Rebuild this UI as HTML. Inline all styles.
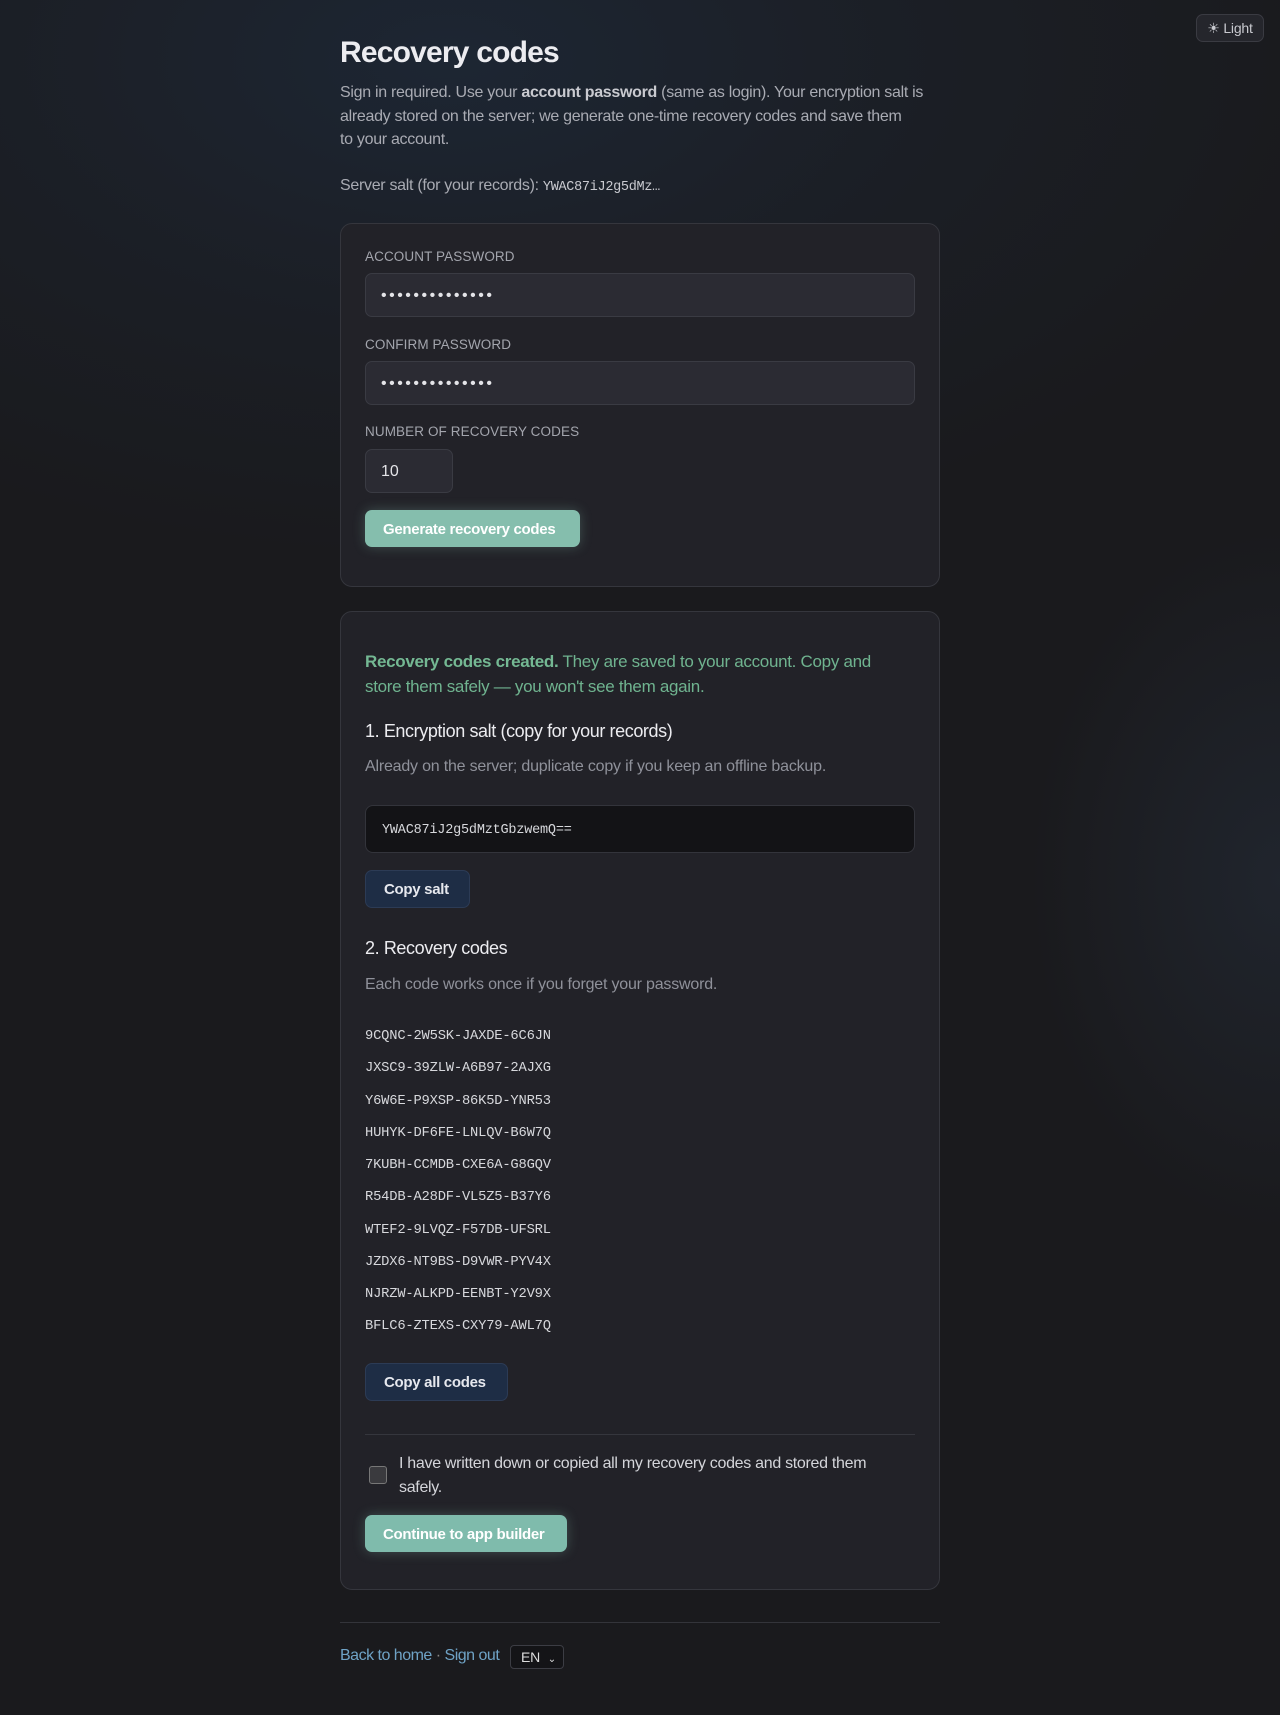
<!DOCTYPE html>
<html><head><meta charset="utf-8"><style>
*{box-sizing:border-box;margin:0;padding:0}
html,body{width:1280px;height:1715px;overflow:hidden}
body{background:#1a1a1d;font-family:"Liberation Sans",sans-serif;color:#e6e6ea;position:relative;letter-spacing:-0.2px}
.bg{position:absolute;inset:0;background:radial-gradient(ellipse 900px 500px at 450px 60px,#1d2633 0%,rgba(29,38,51,0.4) 50%,rgba(26,26,29,0) 100%),radial-gradient(ellipse 250px 350px at 1280px 880px,rgba(36,44,56,0.6),rgba(26,26,29,0))}
.a{position:absolute}
.light{left:1196px;top:14px;width:68px;height:28px;border:1px solid #3a3b42;border-radius:7px;background:#25262c;color:#c8c9cf;font-size:14px;line-height:26px;text-align:center}
h1{left:340px;top:36px;font-size:30px;font-weight:bold;color:#ececf0;letter-spacing:-0.8px}
.intro{left:340px;top:81px;width:610px;font-size:16px;line-height:23.5px;color:#a9abb3;letter-spacing:-0.3px}
.intro b{color:#c9cad0}
.mono{font-family:"Liberation Mono",monospace;font-size:13.5px;color:#c9cad0}
.card{left:340px;width:600px;background:#222228;border:1px solid #35363d;border-radius:12px}
.lbl{left:365px;font-size:13.5px;color:#a3a5ad;letter-spacing:0.1px}
.inp{left:365px;width:550px;height:44px;background:#2b2b33;border:1px solid #3a3b43;border-radius:7px;padding-left:15px;font-size:16px;line-height:44px;color:#e4e4e8;letter-spacing:2.5px}
.btn{left:365px;height:37px;border-radius:7px;background:#85bead;color:#fff;font-size:15px;font-weight:bold;line-height:39px;padding-left:18px;box-shadow:0 0 12px rgba(133,190,173,0.3);letter-spacing:-0.3px}
.btn2{left:365px;height:38px;border-radius:7px;background:#1e2d45;border:1px solid #2c3b55;color:#e6e8ee;font-size:15px;font-weight:bold;line-height:38px;padding-left:18px;letter-spacing:-0.3px}
.h2{left:365px;font-size:18px;color:#ececf0;letter-spacing:-0.4px}
.desc{left:365px;font-size:16px;color:#8f919a}
.code{left:365px;font-family:"Liberation Mono",monospace;font-size:13.8px;color:#d7d8dc}
</style></head><body>
<div class="bg"></div>
<div class="a light">☀ Light</div>
<h1 class="a">Recovery codes</h1>
<div class="a intro">Sign in required. Use your <b>account password</b> (same as login). Your encryption salt is<br>already stored on the server; we generate one-time recovery codes and save them<br>to your account.</div>
<div class="a intro" style="top:174px">Server salt (for your records): <span class="mono">YWAC87iJ2g5dMz…</span></div>

<div class="a card" style="top:223px;height:364px"></div>
<div class="a lbl" style="top:249px">ACCOUNT PASSWORD</div>
<div class="a inp" style="top:273px">••••••••••••••</div>
<div class="a lbl" style="top:337px">CONFIRM PASSWORD</div>
<div class="a inp" style="top:361px">••••••••••••••</div>
<div class="a lbl" style="top:424px">NUMBER OF RECOVERY CODES</div>
<div class="a inp" style="top:449px;width:88px;letter-spacing:0">10</div>
<div class="a btn" style="top:510px;width:215px">Generate recovery codes</div>

<div class="a card" style="top:611px;height:979px"></div>
<div class="a" style="left:365px;top:649px;width:540px;font-size:17px;line-height:25px;color:#6fb38f;letter-spacing:-0.3px"><b style="color:#74b893">Recovery codes created.</b> They are saved to your account. Copy and store them safely — you won't see them again.</div>
<div class="a h2" style="top:721px">1. Encryption salt (copy for your records)</div>
<div class="a desc" style="top:758px">Already on the server; duplicate copy if you keep an offline backup.</div>
<div class="a" style="left:365px;top:805px;width:550px;height:48px;background:#131316;border:1px solid #33343b;border-radius:8px;padding-left:16px;line-height:46px"><span class="mono" style="color:#d7d8dc">YWAC87iJ2g5dMztGbzwemQ==</span></div>
<div class="a btn2" style="top:870px;width:105px">Copy salt</div>
<div class="a h2" style="top:938px">2. Recovery codes</div>
<div class="a desc" style="top:976px">Each code works once if you forget your password.</div>
<div class="a code" style="top:1029px">9CQNC-2W5SK-JAXDE-6C6JN</div>
<div class="a code" style="top:1061px">JXSC9-39ZLW-A6B97-2AJXG</div>
<div class="a code" style="top:1094px">Y6W6E-P9XSP-86K5D-YNR53</div>
<div class="a code" style="top:1126px">HUHYK-DF6FE-LNLQV-B6W7Q</div>
<div class="a code" style="top:1158px">7KUBH-CCMDB-CXE6A-G8GQV</div>
<div class="a code" style="top:1190px">R54DB-A28DF-VL5Z5-B37Y6</div>
<div class="a code" style="top:1223px">WTEF2-9LVQZ-F57DB-UFSRL</div>
<div class="a code" style="top:1255px">JZDX6-NT9BS-D9VWR-PYV4X</div>
<div class="a code" style="top:1287px">NJRZW-ALKPD-EENBT-Y2V9X</div>
<div class="a code" style="top:1319px">BFLC6-ZTEXS-CXY79-AWL7Q</div>
<div class="a btn2" style="top:1363px;width:143px">Copy all codes</div>
<div class="a" style="left:365px;top:1434px;width:550px;height:1px;background:#35363d"></div>
<div class="a" style="left:369px;top:1466px;width:18px;height:18px;border:1px solid #777;border-radius:3px;background:#3a3a3e"></div>
<div class="a" style="left:399px;top:1452px;width:520px;font-size:16px;line-height:24px;color:#d4d5da;letter-spacing:-0.3px">I have written down or copied all my recovery codes and stored them<br>safely.</div>
<div class="a btn" style="top:1515px;width:202px;background:#7fbbac">Continue to app builder</div>

<div class="a" style="left:340px;top:1622px;width:600px;height:1px;background:#33343a"></div>
<div class="a" style="left:340px;top:1647px;font-size:16px;color:#6fa3c6;letter-spacing:-0.5px">Back to home <span style="color:#888">·</span> Sign out</div>
<div class="a" style="left:510px;top:1645px;width:54px;height:24px;border:1px solid #3c3d44;border-radius:4px;background:#141417;color:#ddd;font-size:14px;line-height:22px;padding-left:10px">EN <span style="font-size:10px;margin-left:4px">⌄</span></div>
</body></html>
